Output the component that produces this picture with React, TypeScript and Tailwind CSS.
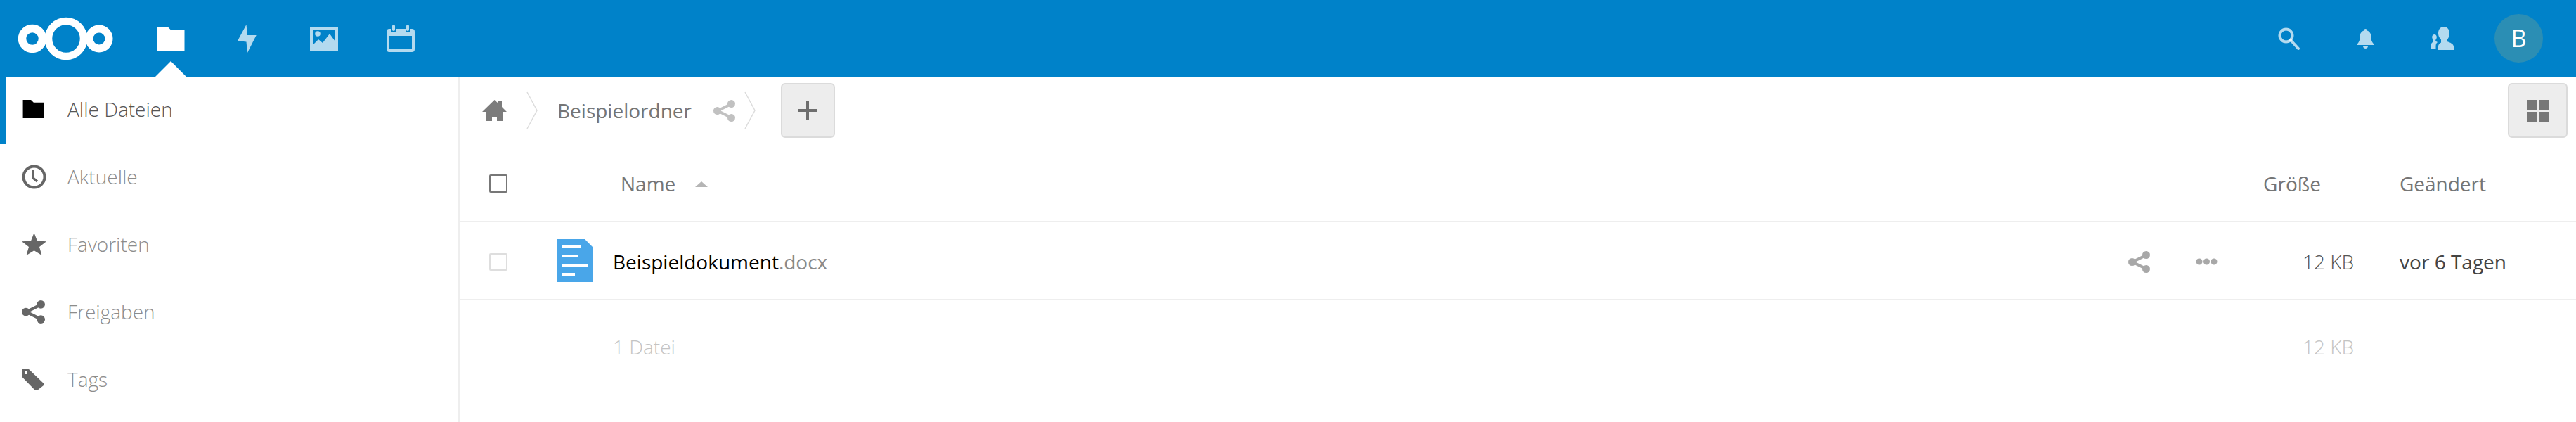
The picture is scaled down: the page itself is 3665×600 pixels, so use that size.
const FOLDER = 'M0 0h15l5 5h19v29H0z';

function Logo() {
  return (
    <svg width="136" height="62" viewBox="0 0 136 62" fill="none" stroke="#fff">
      <circle cx="69" cy="31" r="25" strokeWidth="10.5" />
      <circle cx="21" cy="31" r="14.5" strokeWidth="11.5" />
      <circle cx="116" cy="31" r="14" strokeWidth="11" />
    </svg>
  );
}

function Bolt() {
  return (
    <svg width="27" height="40" viewBox="0 0 27 40" fill="#fff" fillOpacity="0.7">
      <path d="M12.5 0L0 23l12.5 1.5L14 40l12.7-25H14z" />
    </svg>
  );
}

function ImageIcon() {
  return (
    <svg width="40" height="34" viewBox="0 0 40 34" fill="#fff" fillOpacity="0.7">
      <path
        fillRule="evenodd"
        d="M0 0h40v34H0zM4 4v22l8-8 6 5 10-13 8 11V4z"
      />
      <circle cx="11" cy="10" r="3.8" />
    </svg>
  );
}

function Calendar() {
  return (
    <svg width="40" height="39" viewBox="0 0 40 39" fill="#fff" fillOpacity="0.7">
      <path
        fillRule="evenodd"
        d="M4 6h3v4h6V6h14v4h6V6h3a4 4 0 0 1 4 4v25a4 4 0 0 1-4 4H4a4 4 0 0 1-4-4V10a4 4 0 0 1 4-4zM4 16v19h32V16z"
      />
      <rect x="8" y="0" width="4" height="9" rx="2" />
      <rect x="28" y="0" width="4" height="9" rx="2" />
    </svg>
  );
}

function Search() {
  return (
    <svg width="31" height="32" viewBox="0 0 31 32" fill="none" stroke="#fff" strokeOpacity="0.7">
      <circle cx="11.5" cy="11.5" r="9" strokeWidth="4" />
      <path d="M18 18l11 12" strokeWidth="4" strokeLinecap="round" />
    </svg>
  );
}

function Bell() {
  return (
    <svg width="23" height="28" viewBox="0 0 23 28" fill="#fff" fillOpacity="0.7">
      <path d="M11.5 0c1.5 0 2.2 1 2.2 2.6C18 4 19.5 7.5 19.5 12c0 4 1 6.500 3.500 9.500V23H0v-1.500C2.500 18.500 3.500 16 3.500 12c0-4.500 1.500-8 5.800-9.400C9.300 1 10 0 11.500 0z" />
      <path d="M8 24.500h7c0 2-1.500 3.500-3.500 3.500S8 26.500 8 24.500z" />
    </svg>
  );
}

function Contacts() {
  return (
    <svg width="32" height="33" viewBox="0 0 32 33" fill="#fff" fillOpacity="0.7">
      <path d="M18 0c5 0 8 4 8 9.500 0 4-1.500 7-3.500 9v2.500c4 1.500 9.500 3 9.500 7.500V33H10v-5c0-3 2-4 4-5.500v-4c-2-2-4-5-4-9C10 4 13 0 18 0z" />
      <path d="M4.500 11c2 0 3.300 1.600 3.300 3.800 0 1.700-.8 3.200-1.600 4v2c1 .4 2 .8 2.800 1.300-1.600 1.300-2.500 3-2.500 5.400V31H0v-6c0-2 2-2.800 3-3.500v-2.700c-.8-.8-1.800-2.300-1.800-4C1.200 12.600 2.500 11 4.500 11z" />
    </svg>
  );
}

function FolderIcon({ className }: { className: string }) {
  return (
    <svg viewBox="0 0 39 34" className={className}>
      <path d={FOLDER} fill="currentColor" />
    </svg>
  );
}

function Clock() {
  return (
    <svg width="35" height="35" viewBox="0 0 35 35" fill="none" stroke="#666">
      <circle cx="17.500" cy="17.500" r="15" strokeWidth="4" />
      <path d="M16 8v11l6 5" strokeWidth="3.500" />
    </svg>
  );
}

function Star() {
  return (
    <svg width="35" height="32" viewBox="0 0 35 32" fill="#666">
      <path d="M17.500 0l4.500 11.500 13 .8-10 7.800L28.500 32l-11-6.800L6.500 32l3.500-11.900-10-7.800 13-.8z" />
    </svg>
  );
}

function Share({ color, size }: { color: string; size: number }) {
  return (
    <svg width={size} height={size} viewBox="0 0 31 31" fill={color} stroke={color}>
      <path d="M25 6L6 15.500 25 25" fill="none" strokeWidth="4" />
      <circle cx="25.500" cy="5.500" r="5.500" stroke="none" />
      <circle cx="5.500" cy="15.500" r="5.500" stroke="none" />
      <circle cx="25.500" cy="25.500" r="5.500" stroke="none" />
    </svg>
  );
}

function Tag() {
  return (
    <svg width="32" height="31" viewBox="0 0 32 31" fill="#666">
      <path
        fillRule="evenodd"
        d="M0 1.500L1.500 0H9L31 21v3l-9 7h-3L.5 12 0 10zM4 4v4h4V4z"
      />
    </svg>
  );
}

function Home() {
  return (
    <svg width="35" height="30" viewBox="0 0 35 30" fill="#7c7c7c">
      <path d="M17.500 0L23 5V2h5v8l7 7h-5v13h-9v-6h-7v6H5V17H0z" />
    </svg>
  );
}

function Crumb() {
  return (
    <svg width="16" height="54" viewBox="0 0 16 54" fill="none" stroke="#dcdcdc" strokeWidth="1.500">
      <path d="M1 1l14 26L1 53" />
    </svg>
  );
}

function Plus() {
  return (
    <svg width="26" height="26" viewBox="0 0 26 26" fill="#6e6e6e">
      <path d="M11 0h4v11h11v4H15v11h-4V15H0v-4h11z" />
    </svg>
  );
}

function GridIcon() {
  return (
    <svg width="31" height="31" viewBox="0 0 31 31" fill="#777">
      <rect width="14" height="14" />
      <rect x="17" width="14" height="14" />
      <rect y="17" width="14" height="14" />
      <rect x="17" y="17" width="14" height="14" />
    </svg>
  );
}

function DocIcon() {
  return (
    <svg width="52" height="61" viewBox="0 0 52 61" fill="#fff">
      <path d="M0 0h40l12 12v49H0z" fill="#49a6e9" />
      <rect x="8" y="9" width="27" height="4" />
      <rect x="8" y="22" width="22" height="4" />
      <rect x="8" y="35" width="36" height="4" />
      <rect x="8" y="48" width="18" height="4" />
    </svg>
  );
}

function Dots() {
  return (
    <svg width="31" height="10" viewBox="0 0 31 10" fill="#a8a8a8">
      <circle cx="5" cy="5" r="4.500" />
      <circle cx="15.500" cy="5" r="4.500" />
      <circle cx="26" cy="5" r="4.500" />
    </svg>
  );
}

const navItems = [
  { label: 'Aktuelle', icon: <Clock /> },
  { label: 'Favoriten', icon: <Star /> },
  { label: 'Freigaben', icon: <Share color="#666" size={33} /> },
  { label: 'Tags', icon: <Tag /> },
];

export default function App() {
  return (
    <div className="h-[600px] overflow-hidden bg-white font-['Open_Sans',sans-serif] text-[28px]">
      <header className="flex h-[109px] items-center bg-[#0082c9] pr-[27px]">
        <div className="w-[188px] pl-[25px]">
          <Logo />
        </div>
        <div className="relative flex h-full w-[109px] items-center justify-center">
          <FolderIcon className="h-[34px] w-[40px] text-white" />
          <div className="absolute bottom-0 left-1/2 h-0 w-0 -translate-x-1/2 border-x-[22px] border-b-[22px] border-x-transparent border-b-white" />
        </div>
        <div className="flex w-[109px] justify-center">
          <Bolt />
        </div>
        <div className="flex w-[109px] justify-center">
          <ImageIcon />
        </div>
        <div className="flex w-[109px] justify-center">
          <Calendar />
        </div>
        <div className="flex-1" />
        <div className="flex w-[109px] justify-center">
          <Search />
        </div>
        <div className="flex w-[109px] justify-center">
          <Bell />
        </div>
        <div className="flex w-[109px] justify-center">
          <Contacts />
        </div>
        <div className="flex w-[109px] justify-center">
          <div className="flex h-[69px] w-[69px] items-center justify-center rounded-full bg-[#2b8eb4] text-[34px] font-medium text-white">
            B
          </div>
        </div>
      </header>

      <div className="flex h-[491px]">
        <aside className="w-[654px] shrink-0 border-r-2 border-[#eeeeee]">
          <div className="flex h-24 items-center border-l-[8px] border-[#0082c9] pb-[4px] pl-[24px]">
            <div className="flex w-[64px]">
              <FolderIcon className="h-[26px] w-[31px] text-black" />
            </div>
            <span className="font-light text-[#555]">Alle Dateien</span>
          </div>
          {navItems.map((item) => (
            <div key={item.label} className="flex h-24 items-center pb-[4px] pl-[31px]">
              <div className="flex w-[65px]">{item.icon}</div>
              <span className="font-light text-[#8c8c8c]">{item.label}</span>
            </div>
          ))}
        </aside>

        <main className="min-w-0 flex-1">
          <div className="flex h-[96px] items-center pr-[12px] pl-[32px]">
            <Home />
            <div className="ml-[28px]">
              <Crumb />
            </div>
            <span className="ml-[28px] text-[#757575]">Beispielordner</span>
            <div className="ml-[31px] opacity-60">
              <Share color="#999" size={31} />
            </div>
            <div className="ml-[13px]">
              <Crumb />
            </div>
            <button className="ml-[36px] flex h-[78px] w-[77px] items-center justify-center rounded-md border-2 border-[#dbdbdb] bg-[#ededed]">
              <Plus />
            </button>
            <div className="flex-1" />
            <button className="flex h-[78px] w-[85px] items-center justify-center rounded-md border-2 border-[#dbdbdb] bg-[#ededed]">
              <GridIcon />
            </button>
          </div>

          <div className="flex h-[111px] items-center border-b-2 border-[#eeeeee] pt-[2px]">
            <div className="ml-[42px] h-[26px] w-[26px] rounded-[2px] border-2 border-[#777]" />
            <span className="ml-[161px] text-[#757575]">Name</span>
            <div className="mt-[2px] ml-[28px] h-0 w-0 border-x-[9px] border-b-[8px] border-x-transparent border-b-[#b5b5b5]" />
            <div className="flex-1" />
            <span className="mr-[112px] text-[#757575]">Größe</span>
            <span className="mr-[128px] text-[#757575]">Geändert</span>
          </div>

          <div className="flex h-[111px] items-center border-b-2 border-[#eeeeee] pt-[3px]">
            <div className="ml-[42px] h-[25px] w-[26px] rounded-[2px] border-2 border-[#dedede]" />
            <div className="ml-[70px] -mt-[3px]">
              <DocIcon />
            </div>
            <span className="ml-[28px] text-black">
              Beispieldokument<span className="text-[#8a8a8a]">.docx</span>
            </span>
            <div className="flex-1" />
            <div className="mr-[65px]">
              <Share color="#a8a8a8" size={31} />
            </div>
            <Dots />
            <span className="ml-[121px] font-light text-[#555]">12 KB</span>
            <span className="mr-[99px] ml-[65px] text-[#444]">vor 6 Tagen</span>
          </div>

          <div className="flex h-[132px] items-center text-[#c4c4c4]">
            <span className="ml-[218px] font-light">1 Datei</span>
            <div className="flex-1" />
            <span className="mr-[316px] font-light">12 KB</span>
          </div>
        </main>
      </div>
    </div>
  );
}
